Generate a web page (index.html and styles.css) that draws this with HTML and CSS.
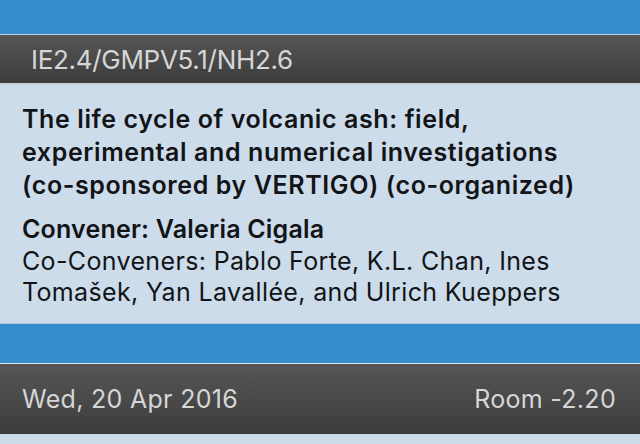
FILE: index.html
```html
<!DOCTYPE html>
<html>
<head>
<meta charset="utf-8">
<link rel="stylesheet" href="styles.css">
</head>
<body>
<div class="page">
  <div class="blue-top"></div>
  <div class="bar bar-code"><span class="code">IE2.4/GMPV5.1/NH2.6</span></div>
  <div class="content">
    <div class="title">The life cycle of volcanic ash: field, experimental and numerical investigations (co-sponsored by VERTIGO) (co-organized)</div>
    <div class="people">
      <div class="convener">Convener: Valeria Cigala</div>
      <div class="coconv">Co-Conveners: Pablo Forte, K.L. Chan, Ines Tomašek, Yan Lavallée, and Ulrich Kueppers</div>
    </div>
  </div>
  <div class="blue-mid"></div>
  <div class="bar bar-date"><span class="date">Wed, 20 Apr 2016</span><span class="room">Room -2.20</span></div>
  <div class="tail"></div>
</div>
</body>
</html>
```
FILE: styles.css
```css
html, body { margin: 0; padding: 0; }
body { width: 640px; height: 444px; overflow: hidden; background: #cddcea; font-family: Inter, "Liberation Sans", sans-serif; }
.page { display: flex; flex-direction: column; width: 640px; }
.blue-top { height: 34px; background: #358dcd; border-bottom: 1px solid #b9d3e8; }
.bar { background: linear-gradient(#575656, #3c3c3c); display: flex; align-items: center; color: #d6d6d6; }
.bar-code { height: 48px; padding-left: 31px; border-bottom: 2px solid #c4d0da; }
.code { font-size: 26px; letter-spacing: -0.3px; }
.content { height: 238px; padding: 0 22px; box-sizing: border-box; color: #121417; }
.title { font-weight: 600; font-size: 25px; line-height: 33px; margin-top: 18px; letter-spacing: 0.6px; }
.people { margin-top: 12px; font-size: 25px; line-height: 31.5px; letter-spacing: 0.35px; }
.convener { font-weight: 600; letter-spacing: 0.2px; }
.blue-mid { height: 39px; background: #358dcd; border-top: 1px solid #b3c6d6; border-bottom: 1px solid #dfe8f0; }
.bar-date { height: 70px; padding: 0 24px 0 22px; justify-content: space-between; font-size: 25px; letter-spacing: 0.3px; }
.tail { height: 10px; background: #cddcea; }
```
